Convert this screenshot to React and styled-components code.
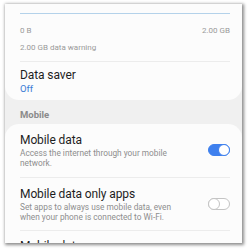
import React from "react";
import styled, { createGlobalStyle } from "styled-components";

const GlobalStyle = createGlobalStyle`
  html, body {
    margin: 0;
    padding: 0;
    background: #ffffff;
  }
  body {
    font-family: Roboto, "Noto Sans", sans-serif;
  }
`;

const Page = styled.div`
  width: 250px;
  height: 250px;
  padding: 4px 8px 0 5px;
  box-sizing: border-box;
  overflow: hidden;
`;

const Screen = styled.div`
  width: 237px;
  height: 239px;
  background: #f0f0f0;
  overflow: hidden;
  box-shadow: 1px 1px 3px 1px rgba(0, 0, 0, 0.45);
  display: flex;
  flex-direction: column;
`;

const Card = styled.div`
  background: #fcfcfc;
  padding: 0 12px 0 15px;
  border-radius: ${(p) => (p.top ? "0 0 14px 14px" : "14px 14px 0 0")};
  flex-shrink: 0;
`;

const Progress = styled.div`
  height: 1px;
  background: #b4d2ea;
  margin-top: 9px;
`;

const Scale = styled.div`
  display: flex;
  justify-content: space-between;
  font-size: 8px;
  color: #9a9a9a;
  margin-top: 12px;
  line-height: 10px;
`;

const Warning = styled.div`
  font-size: 8px;
  color: #9a9a9a;
  line-height: 10px;
  margin-top: 7px;
  padding-bottom: 8px;
  border-bottom: 1px solid #ececec;
`;

const Item = styled.div`
  display: flex;
  align-items: center;
  justify-content: space-between;
  padding: ${(p) => p.pad || "8px 0"};
  border-bottom: ${(p) => (p.last ? "none" : "1px solid #ececec")};
`;

const Texts = styled.div`
  display: flex;
  flex-direction: column;
`;

const Title = styled.div`
  font-size: 12px;
  letter-spacing: -0.1px;
  color: #1e1e1e;
  line-height: 16px;
`;

const Value = styled.div`
  font-size: 9.5px;
  color: #3a7bd5;
  line-height: 12px;
`;

const Sub = styled.div`
  font-size: 8.3px;
  color: #8e8e8e;
  line-height: 10px;
  max-width: 160px;
`;

const Section = styled.div`
  font-size: 9.5px;
  font-weight: 700;
  color: #8a8a8a;
  padding: 9px 0 3px 15px;
  line-height: 12px;
`;

const Toggle = styled.div`
  width: 22px;
  height: 12px;
  border-radius: 6px;
  box-sizing: border-box;
  position: relative;
  flex-shrink: 0;
  background: ${(p) => (p.on ? "#3e80ee" : "#ffffff")};
  border: 1px solid ${(p) => (p.on ? "#3e80ee" : "#c4c4c4")};

  &::after {
    content: "";
    position: absolute;
    top: -1px;
    ${(p) => (p.on ? "right: -1px;" : "left: -1px;")}
    width: 12px;
    height: 12px;
    border-radius: 50%;
    box-sizing: border-box;
    background: #ffffff;
    border: 1px solid ${(p) => (p.on ? "#3e80ee" : "#c4c4c4")};
  }
`;

const App = () => {
  return (
    <>
      <GlobalStyle />
      <Page>
        <Screen>
          <Card top>
            <Progress />
            <Scale>
              <span>0 B</span>
              <span>2.00 GB</span>
            </Scale>
            <Warning>2.00 GB data warning</Warning>
            <Item last pad="5px 0 5px">
              <Texts>
                <Title>Data saver</Title>
                <Value>Off</Value>
              </Texts>
            </Item>
          </Card>
          <Section>Mobile</Section>
          <Card>
            <Item pad="8px 0 9px">
              <Texts>
                <Title>Mobile data</Title>
                <Sub>Access the internet through your mobile network.</Sub>
              </Texts>
              <Toggle on />
            </Item>
            <Item pad="8px 0 8px">
              <Texts>
                <Title>Mobile data only apps</Title>
                <Sub>Set apps to always use mobile data, even when your phone is connected to Wi-Fi.</Sub>
              </Texts>
              <Toggle />
            </Item>
            <Item last pad="7px 0">
              <Texts>
                <Title>Mobile data usage</Title>
              </Texts>
            </Item>
          </Card>
        </Screen>
      </Page>
    </>
  );
};

export default App;
